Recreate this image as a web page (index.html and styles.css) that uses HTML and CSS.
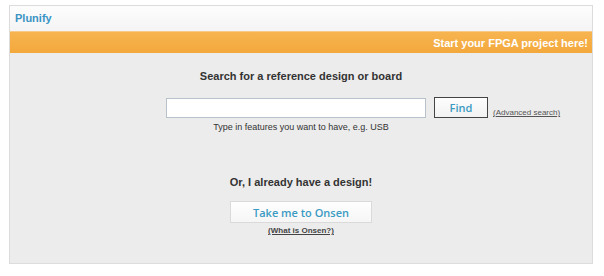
FILE: index.html
```html
<!DOCTYPE html>
<html>
<head>
    <meta charset="UTF-8">
    <title>Plunify</title>
    <link rel="stylesheet" href="styles.css">
</head>
<body>
    <div class="panel">
        <div class="header">Plunify</div>
        <div class="banner">Start your FPGA project here!</div>
        <div class="content">
            <h2 class="title">Search for a reference design or board</h2>
            <div class="search-row">
                <input type="text" class="search-input">
                <div class="search-actions">
                    <button type="button" class="find-btn">Find</button>
                    <a href="#" class="small-link">(Advanced search)</a>
                </div>
            </div>
            <p class="hint">Type in features you want to have, e.g. USB</p>
            <h2 class="title or-title">Or, I already have a design!</h2>
            <button type="button" class="onsen-btn">Take me to Onsen</button>
            <a href="#" class="small-link what-link">(What is Onsen?)</a>
        </div>
    </div>
</body>
</html>
```

FILE: styles.css
```css
body {
    font-family: 'Liberation Sans', Arial, sans-serif;
    margin: 0;
    padding: 5px 0 0 9px;
    background-color: #fff;
    color: #333;
}
.panel {
    width: 582px;
    border: 1px solid #dcdcdc;
    background-color: #ececec;
}
.header {
    height: 25px;
    line-height: 25px;
    padding-left: 5px;
    background: linear-gradient(#fdfdfd, #f4f4f4);
    color: #3b94c4;
    font-weight: bold;
    font-size: 11px;
}
.banner {
    height: 22px;
    line-height: 22px;
    padding-right: 4px;
    text-align: right;
    background: linear-gradient(#f7b44f, #f3a83c);
    border-top: 1px solid #f9c98a;
    box-sizing: border-box;
    color: #fff;
    font-weight: bold;
    font-size: 11px;
}
.content {
    display: flex;
    flex-direction: column;
    align-items: center;
    padding: 16px 0 27px;
}
.title {
    margin: 0;
    font-size: 11px;
    line-height: 14px;
    font-weight: bold;
    color: #333;
}
.search-row {
    display: grid;
    grid-template-columns: 1fr 260px 1fr;
    column-gap: 8px;
    align-self: stretch;
    padding-right: 10px;
    margin-top: 14px;
}
.search-input {
    grid-column: 2;
    height: 20px;
    margin: 1px 0 0;
    padding: 0 4px;
    border: 1px solid #b8c2cc;
    background-color: #fff;
    box-sizing: border-box;
}
.search-actions {
    display: flex;
    align-items: flex-end;
    gap: 5px;
}
.find-btn {
    width: 54px;
    height: 21px;
    padding: 0;
    border: 1px solid #444;
    background: linear-gradient(#fdfdfd, #f2f2f2);
    color: #3b9bc2;
    font-family: 'Open Sans', sans-serif;
    font-weight: 600;
    font-size: 11px;
    cursor: pointer;
}
.small-link {
    font-size: 8px;
    color: #555;
    text-decoration: underline;
    line-height: 10px;
}
.hint {
    margin: 3px 0 0;
    font-size: 9px;
    line-height: 12px;
    color: #333;
}
.or-title {
    margin-top: 42px;
}
.onsen-btn {
    width: 142px;
    height: 22px;
    margin-top: 12px;
    padding: 0;
    border: 1px solid #dadada;
    background: linear-gradient(#fefefe, #f6f6f6);
    color: #3b9bc2;
    font-family: 'Open Sans', sans-serif;
    font-weight: 600;
    font-size: 11px;
    cursor: pointer;
}
.what-link {
    margin-top: 3px;
    font-weight: bold;
    color: #444;
}
```
